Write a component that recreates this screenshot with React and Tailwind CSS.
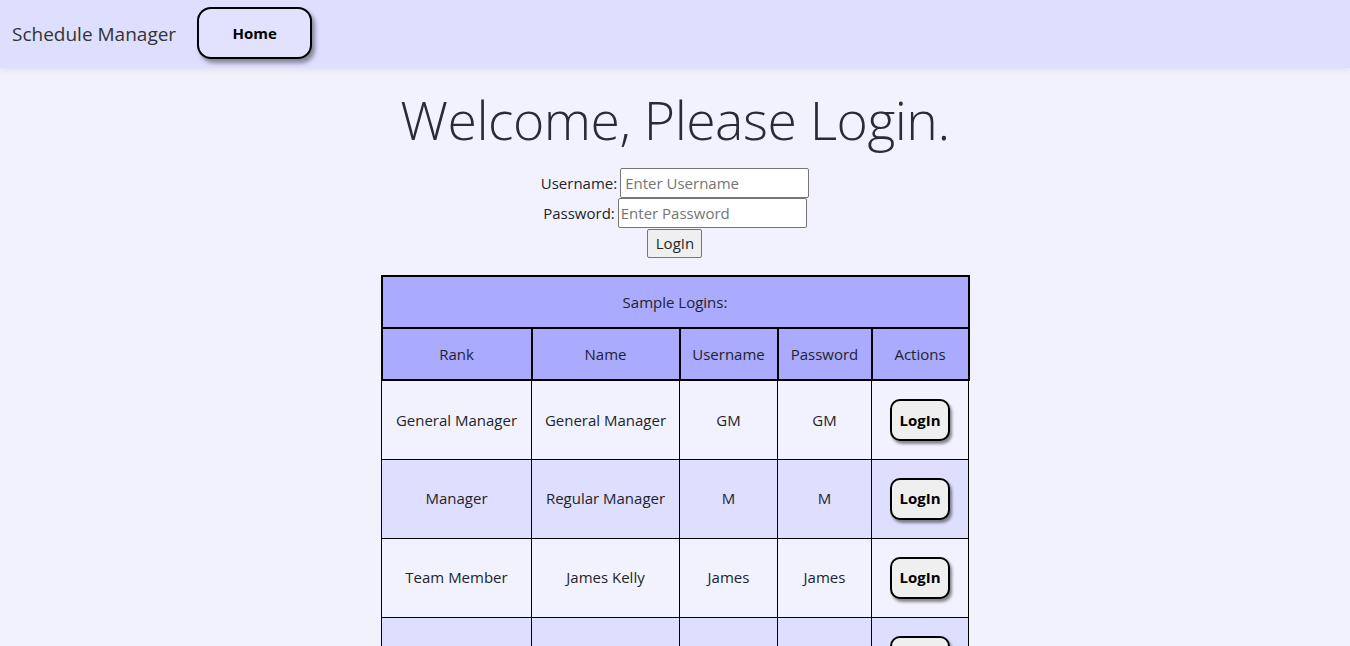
const logins = [
  { rank: 'General Manager', name: 'General Manager', user: 'GM', pass: 'GM' },
  { rank: 'Manager', name: 'Regular Manager', user: 'M', pass: 'M' },
  { rank: 'Team Member', name: 'James Kelly', user: 'James', pass: 'James' },
  { rank: 'Team Member', name: 'Sarah Connor', user: 'Sarah', pass: 'Sarah' },
];

const LoginButton = () => (
  <button className="w-[60px] h-[42px] rounded-[10px] border-2 border-black bg-[#efefef] text-[15px] font-bold text-black shadow-[2px_3px_3px_rgba(0,0,0,0.45)]">
    LogIn
  </button>
);

export default function App() {
  return (
    <div className="min-h-[646px] bg-[#f2f2ff] text-[#212529] font-['Open_Sans','Noto_Sans',sans-serif]">
      <nav className="h-[68px] bg-[#dedeff] flex items-center px-3 gap-[21px] shadow-[0_2px_6px_rgba(0,0,0,0.08)]">
        <span className="text-[19px] text-[#333]">Schedule Manager</span>
        <button className="w-[115px] h-[52px] mt-[-2px] rounded-[14px] border-2 border-black bg-[#e2e2ff] text-[15px] font-bold text-black shadow-[3px_4px_4px_rgba(0,0,0,0.4)]">
          Home
        </button>
      </nav>

      <main className="flex flex-col items-center">
        <h1 className="mt-[18px] text-[53.5px] leading-[67px] font-light text-[#2a2a3a] tracking-[-0.5px]">
          Welcome, Please Login.
        </h1>
        <div className="mt-[15px] flex flex-col items-center text-[15px]">
          <div className="flex items-center h-[30px]">
            <label className="mr-[3px]">Username:</label>
            <input
              className="w-[189px] h-[30px] px-[4px] bg-white border border-[#767676] rounded-[2px] text-[15px] placeholder:text-[#757575]"
              placeholder="Enter Username"
            />
          </div>
          <div className="flex items-center h-[30px]">
            <label className="mr-[3px]">Password:</label>
            <input
              type="password"
              className="w-[189px] h-[30px] px-[2px] bg-white border border-[#767676] rounded-[2px] text-[15px] placeholder:text-[#757575]"
              placeholder="Enter Password"
            />
          </div>
          <button className="mt-[1px] w-[55px] h-[29px] bg-[#efefef] border border-[#767676] rounded-[2px] text-[15px]">
            LogIn
          </button>
        </div>

        <table className="mt-[17px] w-[589px] border-collapse text-[15px] text-center">
          <thead className="bg-[#aaaaff]">
            <tr className="h-[52px]">
              <th colSpan={5} className="border-2 border-black font-normal">Sample Logins:</th>
            </tr>
            <tr className="h-[52px]">
              <th className="w-[150px] border-2 border-black font-normal">Rank</th>
              <th className="w-[148px] border-2 border-black font-normal">Name</th>
              <th className="w-[98px] border-2 border-black font-normal">Username</th>
              <th className="w-[94px] border-2 border-black font-normal">Password</th>
              <th className="w-[97px] border-2 border-black font-normal">Actions</th>
            </tr>
          </thead>
          <tbody>
            {logins.map((l, i) => (
              <tr key={i} className={`h-[79px] ${i % 2 ? 'bg-[#dedeff]' : 'bg-[#f2f2ff]'}`}>
                <td className="border border-black">{l.rank}</td>
                <td className="border border-black">{l.name}</td>
                <td className="border border-black">{l.user}</td>
                <td className="border border-black">{l.pass}</td>
                <td className="border border-black">
                  <LoginButton />
                </td>
              </tr>
            ))}
          </tbody>
        </table>
      </main>
    </div>
  );
}
